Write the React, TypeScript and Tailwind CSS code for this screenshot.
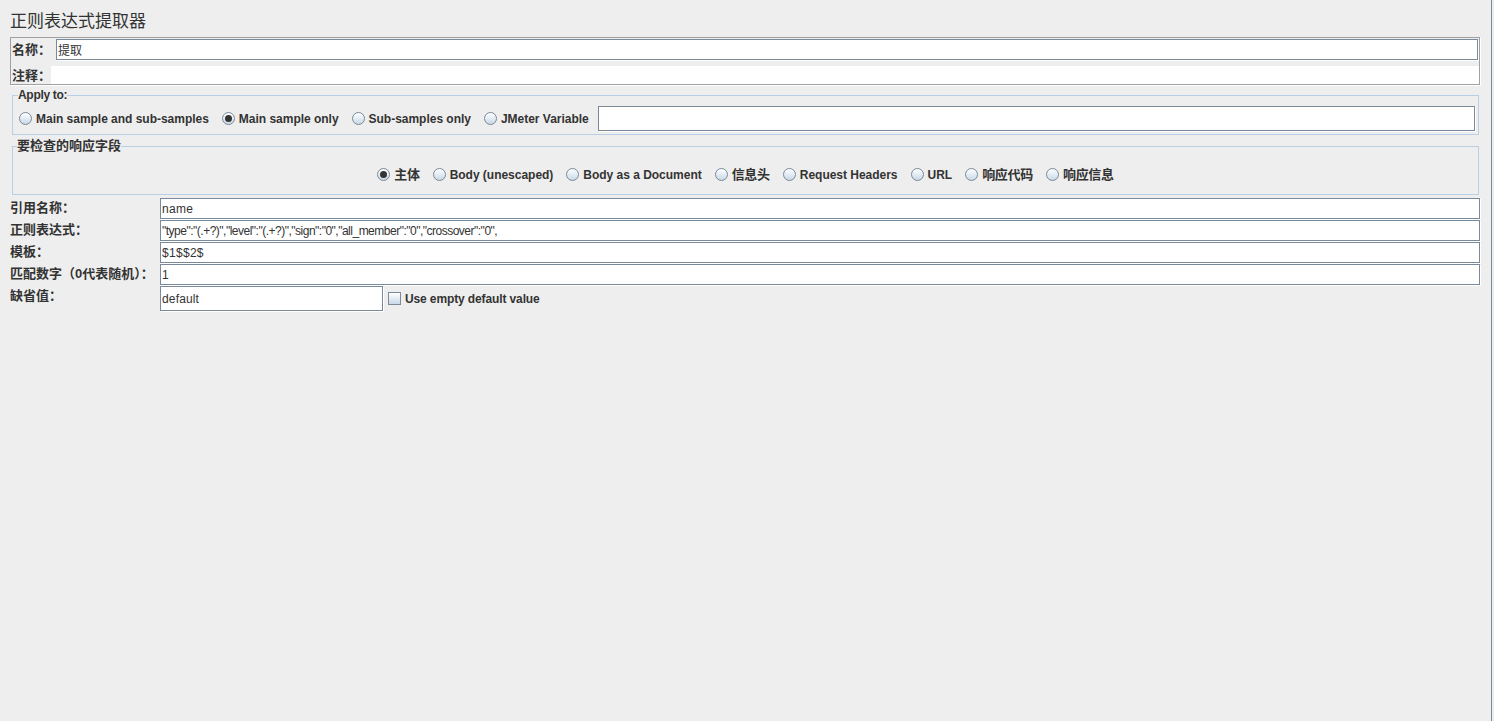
const FONT = "font-['Liberation_Sans','Noto_Sans_CJK_SC',sans-serif]";

function Radio({ label, checked, cjk }: { label: string; checked?: boolean; cjk?: boolean }) {
  return (
    <label className="flex items-center gap-[4px] font-bold text-[#333]">
      <span className="flex h-[13px] w-[13px] shrink-0 items-center justify-center rounded-full border border-[#7a8a99] bg-gradient-to-b from-white to-[#c8d8e8]">
        {checked && <span className="h-[7px] w-[7px] rounded-full bg-[#333]" />}
      </span>
      <span className={cjk ? "text-[13px] tracking-[-0.3px]" : "text-xs tracking-[-0.02px]"}>{label}</span>
    </label>
  );
}

function Field({ value, className }: { value?: string; className?: string }) {
  return (
    <input
      readOnly
      value={value ?? ""}
      className={`border border-[#7a8a99] bg-white pl-[1px] text-xs text-[#333] shadow-[1px_1px_0_#fff] outline-none ${className ?? ""}`}
    />
  );
}

function Row({ label, value, tight }: { label: string; value: string; tight?: boolean }) {
  return (
    <div className="flex h-[22px] pl-[10px] pr-[11px]">
      <span className="w-[150px] shrink-0 whitespace-nowrap text-[13px] font-bold text-[#333]">{label}</span>
      <Field value={value} className={`h-[21px] flex-1 ${tight ? "tracking-[-0.5px]" : "tracking-[0.3px]"}`} />
    </div>
  );
}

export default function App() {
  return (
    <div className={`flex h-[721px] w-[1494px] overflow-hidden bg-[#eeeeee] ${FONT}`}>
      <div className="w-[1491px] shrink-0">
        {/* title */}
        <h1 className="flex h-[37px] items-center pt-[6px] pl-[10px] text-[17px] font-normal text-[#333]">
          正则表达式提取器
        </h1>

        {/* name + comment */}
        <div className="ml-[10px] mr-[11px] h-[48px] border border-[#a0a0a0] shadow-[1px_1px_0_#fff]">
          <div className="flex h-[22px] pl-[1px] pr-[1px] pt-[1px]">
            <span className="w-[44px] shrink-0 pt-[1px] text-[13px] font-bold text-[#333]">名称：</span>
            <Field value="提取" className="h-[21px] flex-1" />
          </div>
          <div className="mt-[6px] flex h-[18px]">
            <span className="w-[40px] shrink-0 pl-[1px] text-[13px] font-bold text-[#333]">注释：</span>
            <div className="h-full flex-1 bg-white" />
          </div>
        </div>

        {/* apply to */}
        <fieldset className="ml-[12px] mr-[12px] mt-[3px] h-[47px] border border-[#b8cfe5] pl-[5px] pr-[3px]">
          <legend className="px-0 text-xs font-bold leading-[14px] tracking-[-0.3px] text-[#333]">Apply to:</legend>
          <div className="mt-[4px] flex h-[25px] items-center">
            <div className="ml-[1px] flex items-center gap-[13px]">
              <Radio label="Main sample and sub-samples" />
              <Radio label="Main sample only" checked />
              <Radio label="Sub-samples only" />
              <Radio label="JMeter Variable" />
            </div>
            <Field className="ml-[9px] h-[25px] flex-1" />
          </div>
        </fieldset>

        {/* response field */}
        <fieldset className="ml-[12px] mr-[12px] mt-[4px] h-[56px] border border-[#b8cfe5] pl-[4px] pr-[4px]">
          <legend className="px-0 text-[13px] font-bold leading-[14px] text-[#333]">要检查的响应字段</legend>
          <div className="flex h-[41px] items-center justify-center gap-[13px] pt-[2px]">
            <Radio label="主体" checked cjk />
            <Radio label="Body (unescaped)" />
            <Radio label="Body as a Document" />
            <Radio label="信息头" cjk />
            <Radio label="Request Headers" />
            <Radio label="URL" />
            <Radio label="响应代码" cjk />
            <Radio label="响应信息" cjk />
          </div>
        </fieldset>

        {/* extractor fields */}
        <div className="mt-[3px]">
          <Row label="引用名称：" value="name" />
          <Row label="正则表达式：" value={'"type":"(.+?)","level":"(.+?)","sign":"0","all_member":"0","crossover":"0",'} tight />
          <Row label="模板：" value="$1$$2$" />
          <Row label="匹配数字（0代表随机）：" value="1" />
          <div className="flex h-[25px] pl-[10px]">
            <span className="w-[150px] shrink-0 text-[13px] font-bold text-[#333]">缺省值：</span>
            <Field value="default" className="h-[25px] w-[223px] tracking-[0.15px]" />
            <label className="ml-[5px] flex items-center gap-[4px] text-xs font-bold tracking-[-0.12px] text-[#333]">
              <span className="h-[13px] w-[13px] border border-[#7a8a99] bg-gradient-to-b from-white to-[#c8d8e8]" />
              Use empty default value
            </label>
          </div>
        </div>
      </div>
      <div className="w-[1px] shrink-0 bg-[#7a8a99]" />
    </div>
  );
}
